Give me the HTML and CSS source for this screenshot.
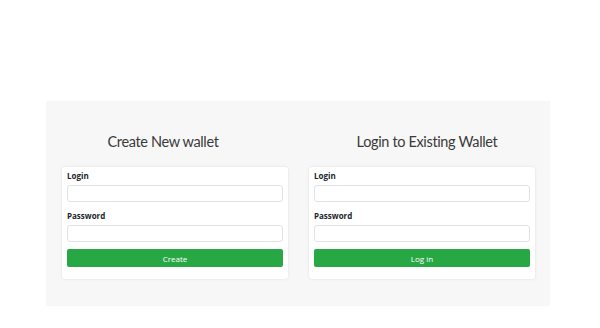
FILE: index.html
```html
<!DOCTYPE html>
<html lang="en">
<head>
  <meta charset="UTF-8" />
  <meta name="viewport" content="width=device-width, initial-scale=1.0" />
  <title>Wallet</title>
  <link rel="stylesheet" href="styles.css">
</head>
<body>
  <div class="container">
    <div class="panel">
      <div class="titles">
        <h2>Create New wallet</h2>
        <h2>Login to Existing Wallet</h2>
      </div>
      <div class="cards">
        <div class="card">
          <label for="newLogin">Login</label>
          <input type="text" id="newLogin" />
          <label for="newPassword">Password</label>
          <input type="password" id="newPassword" />
          <button class="btn">Create</button>
        </div>
        <div class="card">
          <label for="login">Login</label>
          <input type="text" id="login" />
          <label for="password">Password</label>
          <input type="password" id="password" />
          <button class="btn">Log in</button>
        </div>
      </div>
    </div>
  </div>
</body>
</html>
```

FILE: styles.css
```css
html, body {
  margin: 0;
  padding: 0;
  font-family: 'Open Sans', 'Noto Sans', sans-serif;
  background: #fff;
  color: #212529;
}

.container {
  padding: 101px 50px 0 46px;
}

.panel {
  background: #f7f7f7;
  padding: 31px 15px 27px 16px;
}

.titles {
  display: flex;
  margin: 0 -24px 15px -31px;
}

h2 {
  flex: 1;
  margin: 0;
  font-family: 'Lato', 'Open Sans', sans-serif;
  font-size: 14.5px;
  letter-spacing: -0.35px;
  line-height: 20px;
  font-weight: 400;
  text-align: center;
  color: #3a3a3a;
}

.cards {
  display: flex;
  gap: 21px;
}

.card {
  flex: 1;
  display: flex;
  flex-direction: column;
  background: #fff;
  border-radius: 3px;
  box-shadow: 0 0 3px rgba(0, 0, 0, 0.1);
  padding: 3px 5px 12px;
}

label {
  font-size: 8px;
  font-weight: 700;
  line-height: 12px;
  margin-bottom: 3px;
}

input {
  height: 17px;
  box-sizing: border-box;
  border: 1px solid #dfe2e6;
  border-radius: 3px;
  margin-bottom: 8px;
  outline: none;
}

.btn {
  height: 18px;
  margin-top: -1px;
  border: none;
  border-radius: 2px;
  background: #28a745;
  color: #fff;
  font-family: inherit;
  font-size: 8px;
  cursor: pointer;
}
```
